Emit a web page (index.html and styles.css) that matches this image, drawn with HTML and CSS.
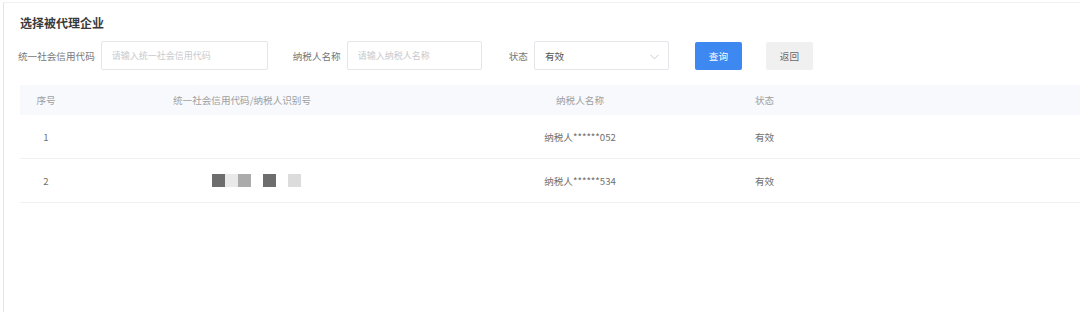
FILE: index.html
```html
<!DOCTYPE html>
<html lang="zh-CN">
<head>
<meta charset="utf-8">
<title>选择被代理企业</title>
<link rel="stylesheet" href="styles.css">
</head>
<body>
<div class="card">
  <div class="title">选择被代理企业</div>
  <div class="filters">
    <div class="group g1">
      <span class="label">统一社会信用代码</span>
      <div class="input w167"><span class="ph">请输入统一社会信用代码</span></div>
    </div>
    <div class="group g2">
      <span class="label">纳税人名称</span>
      <div class="input w135"><span class="ph">请输入纳税人名称</span></div>
    </div>
    <div class="group g3">
      <span class="label">状态</span>
      <div class="input w135 select">
        <span class="val">有效</span>
        <svg class="chev" width="9" height="6" viewBox="0 0 9 6"><polyline points="0.5,0.8 4.5,4.8 8.5,0.8" fill="none" stroke="#c8cbd2" stroke-width="1"/></svg>
      </div>
    </div>
    <button class="btn primary">查询</button>
    <button class="btn plain">返回</button>
  </div>
  <div class="table">
    <div class="row head">
      <div class="c c1">序号</div>
      <div class="c c2">统一社会信用代码/纳税人识别号</div>
      <div class="c c3">纳税人名称</div>
      <div class="c c4">状态</div>
    </div>
    <div class="row">
      <div class="c c1">1</div>
      <div class="c c2"></div>
      <div class="c c3">纳税人******052</div>
      <div class="c c4">有效</div>
    </div>
    <div class="row">
      <div class="c c1">2</div>
      <div class="c c2 mosaic">
        <span class="blk b-dark"></span><span class="blk b-faint"></span><span class="blk b-mid"></span><span class="blk b-dark gap"></span><span class="blk b-light gap"></span>
      </div>
      <div class="c c3">纳税人******534</div>
      <div class="c c4">有效</div>
    </div>
  </div>
</div>
</body>
</html>
```

FILE: styles.css
```css
html, body {
  margin: 0;
  padding: 0;
  background: #ffffff;
}
body {
  font-family: "Noto Sans CJK SC", "Noto Sans", sans-serif;
  font-size: 9.6px;
  color: #777;
  width: 1080px;
  height: 312px;
  overflow: hidden;
}
.card {
  margin: 2px 0 0 3px;
  border-left: 1px solid #e4e4e4;
  border-top: 1px solid #f2f2f2;
  height: 320px;
  padding: 10px 0 0 16px;
  box-sizing: border-box;
}
.title {
  font-size: 12px;
  font-weight: 700;
  color: #3a3a3a;
  line-height: 20px;
}
.filters {
  display: flex;
  align-items: center;
  margin-top: 8px;
  margin-left: -2px;
  height: 29px;
}
.group {
  display: flex;
  align-items: center;
}
.g1 { margin-right: 25px; }
.g2 { margin-right: 27px; }
.g3 { margin-right: 26px; }
.label {
  color: #777;
  margin-right: 6px;
  white-space: nowrap;
}
.input {
  height: 29px;
  box-sizing: border-box;
  border: 1px solid #e4e6ea;
  border-radius: 2px;
  display: flex;
  align-items: center;
  padding-left: 10px;
}
.w167 { width: 167px; }
.w135 { width: 135px; }
.ph {
  color: #c8cace;
  font-size: 9px;
  white-space: nowrap;
}
.select { position: relative; }
.val { color: #555; }
.chev { position: absolute; right: 9px; top: 12px; }
.btn {
  font-family: inherit;
  font-size: 9.6px;
  height: 28px;
  width: 47px;
  border: none;
  border-radius: 2px;
  padding: 0;
}
.primary {
  background: #3e88f1;
  color: #fff;
  margin-right: 24px;
}
.plain {
  background: #f0f0f0;
  color: #666;
}
.table {
  margin-top: 15px;
}
.row {
  display: grid;
  grid-template-columns: 52px 340px 336px 1fr;
  height: 43px;
  align-items: center;
  border-bottom: 1px solid #eef0f3;
  color: #707070;
}
.row.head {
  height: 30px;
  background: #f7f9fc;
  border-bottom: none;
  color: #a0a0a0;
}
.c1 { text-align: center; }
.c2 { text-align: center; }
.c3 { text-align: center; }
.c4 { padding-left: 7px; }
.mosaic {
  display: flex;
  align-items: center;
  padding-left: 140px;
  height: 13px;
}
.blk {
  display: block;
  width: 13px;
  height: 13px;
}
.blk.gap { margin-left: 12px; }
.b-dark { background: #6d6d6d; }
.b-faint { background: #e9e9e9; }
.b-mid { background: #ababab; }
.b-light { background: #dcdcdc; }
```
